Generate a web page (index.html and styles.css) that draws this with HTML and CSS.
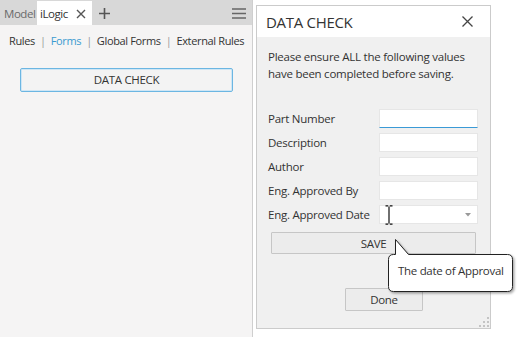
FILE: index.html
```html
<!DOCTYPE html>
<html>
<head>
<meta charset="utf-8">
<link rel="stylesheet" href="styles.css">
</head>
<body>
<div class="page">
  <aside class="panel">
    <div class="tabbar">
      <span class="tab">Model</span>
      <span class="tab active"><span class="tab-label">iLogic</span>
        <svg class="tab-x" width="10" height="10" viewBox="0 0 10 10"><path d="M1 1L9 9M9 1L1 9" stroke="#555" stroke-width="1.4"/></svg>
      </span>
      <svg class="plus" width="11" height="11" viewBox="0 0 11 11"><path d="M5.5 0V11M0 5.5H11" stroke="#555" stroke-width="1.6"/></svg>
      <svg class="menu" width="14" height="11" viewBox="0 0 14 11"><path d="M0 1H14M0 5.5H14M0 10H14" stroke="#666" stroke-width="1.6"/></svg>
    </div>
    <nav class="links">
      <span>Rules</span><span class="sep">|</span><span class="on">Forms</span><span class="sep">|</span><span>Global Forms</span><span class="sep">|</span><span>External Rules</span>
    </nav>
    <div class="btn-wrap"><button class="form-btn">DATA CHECK</button></div>
  </aside>
  <main class="canvas">
    <section class="dialog">
      <header class="dlg-title">
        <span>DATA CHECK</span>
        <svg width="11" height="11" viewBox="0 0 11 11"><path d="M0.5 0.5L10.5 10.5M10.5 0.5L0.5 10.5" stroke="#444" stroke-width="1.3"/></svg>
      </header>
      <div class="dlg-body">
        <p class="intro">Please ensure ALL the following values have been completed before saving.</p>
        <div class="fields">
          <div class="row"><label>Part Number</label><div class="input focus"></div></div>
          <div class="row"><label>Description</label><div class="input"></div></div>
          <div class="row"><label>Author</label><div class="input"></div></div>
          <div class="row"><label>Eng. Approved By</label><div class="input"></div></div>
          <div class="row"><label>Eng. Approved Date</label><div class="input combo"><svg width="6" height="4" viewBox="0 0 6 4"><path d="M0 0H6L3 3.5Z" fill="#999"/></svg></div></div>
        </div>
        <div class="save-row"><button class="btn save">SAVE</button></div>
        <div class="done-row"><button class="btn done">Done</button></div>
        <svg class="grip" width="10" height="10" viewBox="0 0 10 10" fill="#c4c4c4"><rect x="8" y="0" width="2" height="2"/><rect x="8" y="4" width="2" height="2"/><rect x="4" y="4" width="2" height="2"/><rect x="8" y="8" width="2" height="2"/><rect x="4" y="8" width="2" height="2"/><rect x="0" y="8" width="2" height="2"/></svg>
      </div>
    </section>
  </main>
  <svg class="ibeam" width="8" height="20" viewBox="0 0 8 20"><path d="M0.5 0.8H3.2M4.8 0.8H7.5M4 1.5V18.5M0.5 19.2H3.2M4.8 19.2H7.5" stroke="#111" stroke-width="1.2" fill="none"/></svg>
  <div class="tooltip">
    <svg class="tip-shape" width="132" height="60" viewBox="0 0 132 60">
      <defs><filter id="sh" x="-10%" y="-10%" width="130%" height="140%"><feDropShadow dx="1.5" dy="1.5" stdDeviation="1" flood-color="#000" flood-opacity="0.35"/></filter></defs>
      <path filter="url(#sh)" d="M7.5 1.5 L20.5 16.5 H119.5 Q124.5 16.5 124.5 21.5 V48.5 Q124.5 53.5 119.5 53.5 H5.5 Q0.5 53.5 0.5 48.5 V21.5 Q0.5 16.5 5.5 16.5 H7.5 Z" fill="#fff" stroke="#222" stroke-width="1"/>
    </svg>
    <span class="tip-text">The date of Approval</span>
  </div>
</div>
</body>
</html>
```
FILE: styles.css
```css
* { box-sizing: border-box; }
html, body { margin: 0; padding: 0; }
body {
  font-family: "Open Sans", "Noto Sans", sans-serif;
  color: #333;
  background: #fff;
  width: 517px;
  height: 337px;
  overflow: hidden;
}
.page {
  position: relative;
  display: flex;
  width: 517px;
  height: 337px;
}
.panel {
  width: 253px;
  flex: none;
  background: #f5f4f4;
  border-right: 1px solid #cfcfcf;
  display: flex;
  flex-direction: column;
}
.tabbar {
  height: 25px;
  background: #d8d8d8;
  display: flex;
  align-items: flex-end;
  padding-left: 4px;
}
.tab {
  height: 24px;
  display: flex;
  align-items: center;
  font-size: 11.5px;
  letter-spacing: -0.45px;
  color: #6a6a6a;
  white-space: nowrap;
}
.tab:first-child { width: 33px; }
.tab.active {
  background: #fff;
  color: #333;
  width: 55px;
  padding-left: 3px;
}
.tab-label { width: 36px; }
.tab-x { margin-top: 1px; }
.plus { margin-left: 7px; align-self: center; margin-top: 1px; }
.menu { margin-left: auto; margin-right: 6px; align-self: center; margin-top: 1px; }
.links {
  height: 30px;
  display: flex;
  align-items: center;
  padding-left: 9px;
  font-size: 11px;
  letter-spacing: -0.35px;
  white-space: nowrap;
  color: #333;
}
.links .sep { color: #999; margin: 0 5px; }
.links .on { color: #3a9bd0; }
.btn-wrap { padding: 12px 0 0 20px; }
.form-btn {
  width: 213px;
  height: 24px;
  background: #f3f3f3;
  border: 1px solid #6cb6e2;
  box-shadow: inset 0 0 0 1px #cfe6f5;
  border-radius: 2px;
  font-family: inherit;
  font-size: 11.5px;
  letter-spacing: -0.3px;
  color: #333;
  padding: 0;
}
.canvas {
  flex: 1;
  padding: 5px 0 0 3px;
  background: #fff;
}
.dialog {
  width: 235px;
  height: 324px;
  border: 1px solid #cbcbcb;
  display: flex;
  flex-direction: column;
  background: #f0f0f0;
}
.dlg-title {
  height: 31px;
  background: #fff;
  display: flex;
  align-items: center;
  justify-content: space-between;
  padding: 0 17px 0 9px;
  font-size: 15px;
  letter-spacing: -0.3px;
  color: #333;
  flex: none;
}
.dlg-body {
  flex: 1;
  position: relative;
  padding: 11px 0 0 11px;
  font-size: 11.5px;
  letter-spacing: -0.25px;
}
.intro {
  margin: 0;
  line-height: 17px;
  width: 205px;
}
.fields {
  margin-top: 27px;
  display: flex;
  flex-direction: column;
  gap: 5px;
}
.row {
  display: flex;
  align-items: center;
  height: 19px;
}
.row label { width: 111px; flex: none; }
.input {
  width: 99px;
  height: 19px;
  background: #fff;
  border: 1px solid #e6e6e6;
}
.input.focus { border-bottom: 1px solid #3a9ad6; }
.input.combo {
  display: flex;
  align-items: center;
  justify-content: flex-end;
  padding-right: 6px;
}
.save-row { padding: 8px 0 0 3px; }
.btn {
  font-family: inherit;
  font-size: 11.5px;
  letter-spacing: -0.3px;
  color: #333;
  background: #ececec;
  border: 1px solid #c6c6c6;
  border-radius: 1px;
  padding: 0;
}
.save { width: 205px; height: 22px; }
.done-row { padding: 34px 0 0 77px; }
.done { width: 78px; height: 23px; }
.grip { position: absolute; right: 1px; bottom: 1px; }
.ibeam { position: absolute; left: 385px; top: 205px; }
.tooltip {
  position: absolute;
  left: 388px;
  top: 238px;
  width: 132px;
  height: 60px;
}
.tip-shape { position: absolute; left: 0; top: 0; }
.tip-text {
  position: absolute;
  left: 10px;
  top: 25px;
  font-size: 11.5px;
  letter-spacing: -0.3px;
  color: #333;
  white-space: nowrap;
}
```
